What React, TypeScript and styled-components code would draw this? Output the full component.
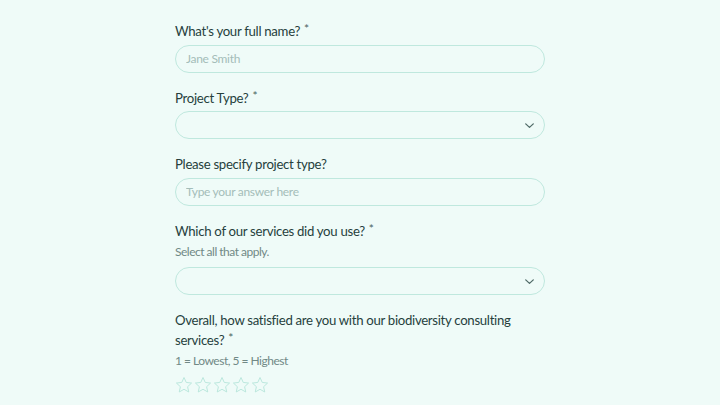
import React from "react";
import styled, { createGlobalStyle } from "styled-components";

const GlobalStyle = createGlobalStyle`
  html, body {
    margin: 0;
    padding: 0;
    background: #effbf8;
  }
  body {
    font-family: Lato, "Noto Sans", sans-serif;
  }
`;

const Page = styled.div`
  width: 720px;
  height: 405px;
  overflow: hidden;
  display: flex;
  justify-content: center;
  background: #effbf8;
`;

const Form = styled.div`
  width: 370px;
  padding-top: 22px;
  display: flex;
  flex-direction: column;
  gap: 16px;
`;

const Field = styled.div`
  display: flex;
  flex-direction: column;
`;

const Label = styled.div`
  font-size: 13.2px;
  line-height: 19.5px;
  color: #263f3d;
  letter-spacing: -0.3px;
  margin-bottom: 3px;

  .req {
    position: relative;
    top: -3px;
    font-size: 12px;
    margin-left: 4px;
    color: #4a6462;
  }
`;

const Hint = styled.div`
  font-size: 12px;
  line-height: 20px;
  letter-spacing: -0.5px;
  color: #718986;
  margin-top: -2px;
  margin-bottom: 5px;
`;

const Input = styled.input`
  box-sizing: border-box;
  width: 100%;
  height: 28px;
  border: 1px solid #bfe8de;
  border-radius: 14px;
  background: #effbf8;
  padding: 0 10px;
  font-family: inherit;
  font-size: 12px;
  letter-spacing: -0.3px;
  color: #24403e;
  outline: none;

  &::placeholder {
    color: #a4bdb9;
  }
`;

const Select = styled.div`
  box-sizing: border-box;
  height: 28px;
  border: 1px solid #bfe8de;
  border-radius: 14px;
  display: flex;
  align-items: center;
  justify-content: flex-end;
  padding-right: 8px;
  color: #4f6a67;
`;

const Stars = styled.div`
  display: flex;
  gap: 1px;
  margin-top: 0px;
`;

const Chevron = () => (
  <svg width="13" height="13" viewBox="0 0 24 24" fill="none" stroke="currentColor" strokeWidth="2.4" strokeLinecap="round" strokeLinejoin="round">
    <path d="M5 9l7 6.5 7-6.5" />
  </svg>
);

const Star = () => (
  <svg width="18" height="18" viewBox="0 0 24 24" fill="none" stroke="#b9e6dc" strokeWidth="1.3" strokeLinejoin="round">
    <path d="M12 2l3 6.6 7.1.8-5.3 4.9 1.5 7L12 17.7l-6.3 3.6 1.5-7-5.3-4.9 7.1-.8z" />
  </svg>
);

const Req = () => <span className="req">*</span>;

export default function App() {
  return (
    <>
      <GlobalStyle />
      <Page>
        <Form>
          <Field>
            <Label>
              What's your full name?<Req />
            </Label>
            <Input placeholder="Jane Smith" />
          </Field>
          <Field>
            <Label>
              Project Type?<Req />
            </Label>
            <Select>
              <Chevron />
            </Select>
          </Field>
          <Field>
            <Label>Please specify project type?</Label>
            <Input placeholder="Type your answer here" />
          </Field>
          <Field>
            <Label>
              Which of our services did you use?<Req />
            </Label>
            <Hint>Select all that apply.</Hint>
            <Select>
              <Chevron />
            </Select>
          </Field>
          <Field>
            <Label>
              Overall, how satisfied are you with our biodiversity consulting services?<Req />
            </Label>
            <Hint>1 = Lowest, 5 = Highest</Hint>
            <Stars>
              {[0, 1, 2, 3, 4].map((i) => (
                <Star key={i} />
              ))}
            </Stars>
          </Field>
        </Form>
      </Page>
    </>
  );
}
